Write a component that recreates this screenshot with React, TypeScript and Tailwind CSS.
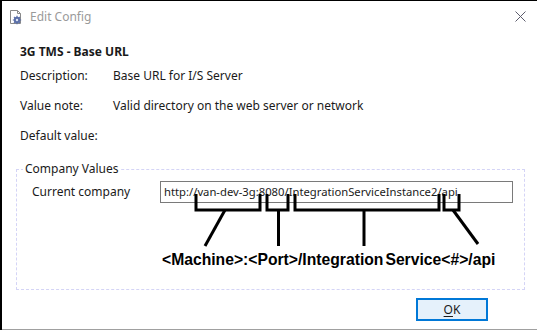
import React from "react";

const font = { fontFamily: '"Noto Sans", "Open Sans", sans-serif' };

function ConfigIcon() {
  return (
    <svg width="16" height="16" viewBox="0 0 16 16" className="shrink-0">
      <path d="M2.5 1.5h7l3 3v10h-10z" fill="#fff" stroke="#8a8a8a" />
      <path d="M9.5 1.5v3h3" fill="none" stroke="#8a8a8a" />
      <circle cx="9" cy="11" r="3.2" fill="#5a6fa8" />
      <circle cx="9" cy="11" r="1.2" fill="#dfe6f5" />
      <path d="M9 6.8v1.2M9 14v1.2M4.8 11H6M12 11h1.2M6 8l.8.8M11.2 13.2l.8.8M12 8l-.8.8M6.8 13.2L6 14" stroke="#5a6fa8" strokeWidth="1.2" />
    </svg>
  );
}

function CloseIcon() {
  return (
    <svg width="11" height="11" viewBox="0 0 11 11" className="shrink-0">
      <path d="M0.5 0.5l10 10M10.5 0.5l-10 10" stroke="#5c5c6c" strokeWidth="1" />
    </svg>
  );
}

function InfoRow({ label, value }: { label: string; value?: string }) {
  return (
    <div className="flex h-[30px] items-center">
      <span className="w-[93px] shrink-0">{label}</span>
      <span>{value}</span>
    </div>
  );
}

// bracket annotation drawn over the url field
function UrlAnnotation() {
  return (
    <svg
      className="pointer-events-none absolute left-0 top-0"
      width="537"
      height="330"
      viewBox="0 0 537 330"
    >
      <g stroke="#000" strokeWidth="3" fill="none" strokeLinecap="butt">
        <path d="M194 193v16h64v-16" />
        <path d="M223 209l-20 36" />
        <path d="M265 193v16h21v-16" />
        <path d="M276.5 209v36" />
        <path d="M293 193v16h144v-16" />
        <path d="M362 209v36" />
        <path d="M442 193v16h15v-16" />
        <path d="M451 209l25 34" />
      </g>
    </svg>
  );
}

export default function App() {
  return (
    <div
      className="relative flex h-[330px] w-[537px] flex-col overflow-hidden border-t border-l-2 border-black bg-white text-[12px] text-[#1a1a1a]"
      style={font}
    >
      {/* Title bar */}
      <div className="flex h-[31px] shrink-0 items-center pl-[6px] pr-[11px]">
        <ConfigIcon />
        <span className="ml-[6px] text-[12px] text-[#9a9a9a]">Edit Config</span>
        <span className="ml-auto">
          <CloseIcon />
        </span>
      </div>

      {/* Body */}
      <div className="flex flex-1 flex-col pl-[18px] pr-[10px]">
        <div className="mt-[10px] flex h-[19px] items-center font-bold">3G TMS - Base URL</div>
        <InfoRow label="Description:" value="Base URL for I/S Server" />
        <InfoRow label="Value note:" value="Valid directory on the web server or network" />
        <InfoRow label="Default value:" />

        {/* Company values group */}
        <div className="relative mt-[18px] ml-[-4px] h-[121px] w-[509px] shrink-0 border border-dashed border-[#d4d4f6]">
          <span className="absolute left-[6px] top-[-10px] bg-white px-[2px]">Company Values</span>
          <div className="mt-[11px] flex items-center pl-[15px]">
            <span className="w-[128px] shrink-0">Current company</span>
            <div className="flex h-[22px] w-[353px] items-center border border-[#7a7a7a] pl-[3px] text-[11.25px]">
              http://van-dev-3g:8080/IntegrationServiceInstance2/api
            </div>
          </div>
          <div
            className="mt-[48px] pl-[145px] text-[15.7px] font-bold leading-[18px] text-black"
            style={{ fontFamily: '"Liberation Sans", Arial, sans-serif' }}
          >
            &lt;Machine&gt;:&lt;Port&gt;/Integration<span className="ml-[2px]">Service</span>&lt;#&gt;/api
          </div>
        </div>

        <div className="flex flex-1 items-start justify-end pr-[39px] pt-[8px]">
          <button className="flex h-[23px] w-[72px] items-center justify-center border-2 border-[#0078d7] bg-[#e5f1fb] text-[12px]">
            <span className="underline underline-offset-2">O</span>K
          </button>
        </div>
      </div>
      <div className="h-px shrink-0 bg-[#a0a0a0]" />

      <UrlAnnotation />
    </div>
  );
}
